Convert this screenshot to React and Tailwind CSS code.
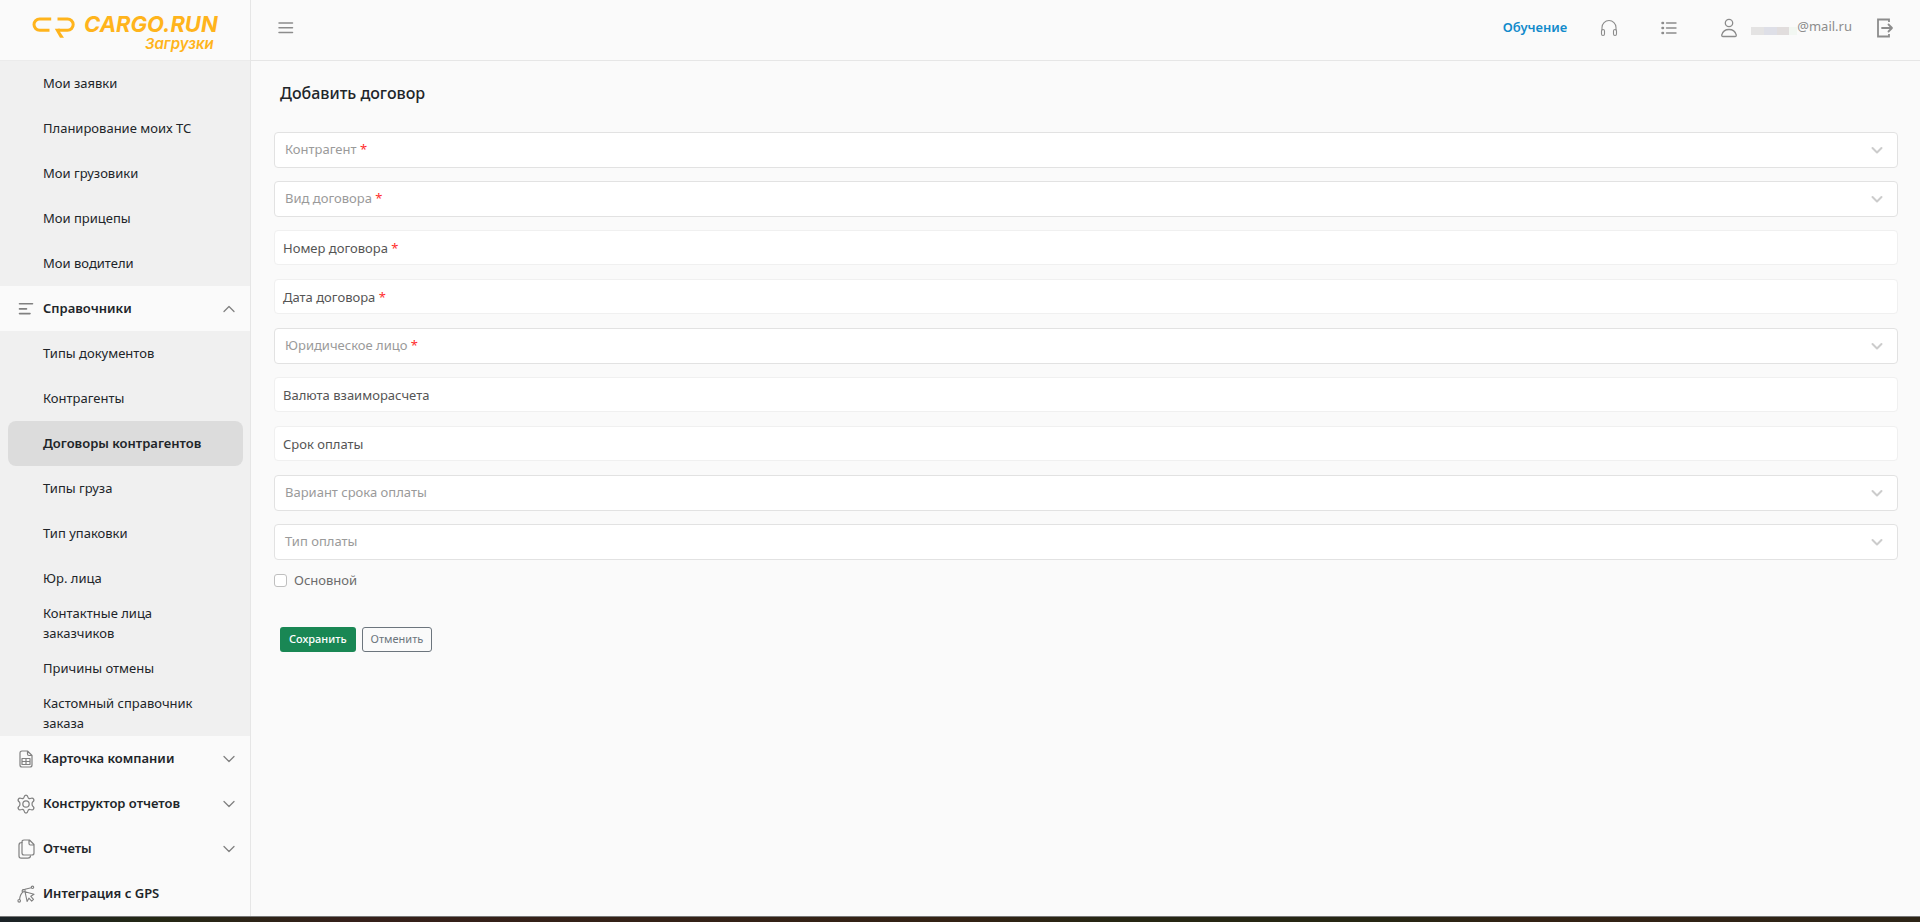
import React from "react";

const catalogTop = ["Мои заявки", "Планирование моих ТС", "Мои грузовики", "Мои прицепы", "Мои водители"];
const catalog = [
  "Типы документов",
  "Контрагенты",
  "Договоры контрагентов",
  "Типы груза",
  "Тип упаковки",
  "Юр. лица",
  "Контактные лица заказчиков",
  "Причины отмены",
  "Кастомный справочник заказа",
];

const fields = [
  { id: "contractor", label: "Контрагент", required: true, kind: "select" },
  { id: "kind", label: "Вид договора", required: true, kind: "select" },
  { id: "number", label: "Номер договора", required: true, kind: "text" },
  { id: "date", label: "Дата договора", required: true, kind: "text" },
  { id: "entity", label: "Юридическое лицо", required: true, kind: "select" },
  { id: "currency", label: "Валюта взаиморасчета", kind: "text" },
  { id: "term", label: "Срок оплаты", kind: "text" },
  { id: "termKind", label: "Вариант срока оплаты", kind: "select" },
  { id: "payKind", label: "Тип оплаты", kind: "select" },
];

function Svg({ size = 18, box = 18, width = 1.1, className = "", children }) {
  return (
    <svg
      width={size}
      height={size}
      viewBox={`0 0 ${box} ${box}`}
      fill="none"
      stroke="currentColor"
      strokeWidth={width}
      strokeLinecap="round"
      strokeLinejoin="round"
      className={`shrink-0 ${className}`}
      aria-hidden="true"
    >
      {children}
    </svg>
  );
}

const ListIcon = () => (
  <Svg width={1.6}>
    <path d="M2.5 3.8h13M2.5 8.9h7M2.5 13.6h10.500" />
  </Svg>
);

const SheetIcon = () => (
  <Svg width={1.2}>
    <path d="M3 3.200C3 1.800 3.600 1 5 1h5.500L15 5.500V15c0 1.400-.6 2-2 2H5c-1.400 0-2-.6-2-2zM10.500 1v3c0 1 .5 1.500 1.500 1.500h3" />
    <path d="M5 8.500h8v6H5zM5 11.500h8M9 8.500v6" />
  </Svg>
);

const GearIcon = () => (
  <Svg size={20} box={24} width={1.5}>
    <circle cx="12" cy="12" r="3.800" />
    <path d="M9.600 3.900C9.900 2.400 10.600 1.200 12 1.200s2.100 1.200 2.400 2.700c.2 1.200 1.500 2 2.700 1.500 1.400-.5 3.200-.8 4 .6s.1 2.800-1.100 3.700c-1 .8-1 3.800 0 4.600 1.200.9 1.900 2.300 1.100 3.700s-2.600 1.100-4 .6c-1.200-.5-2.500.3-2.700 1.500-.3 1.500-1 2.700-2.400 2.700s-2.100-1.200-2.400-2.700c-.2-1.200-1.500-2-2.700-1.500-1.400.5-3.200.8-4-.6s-.1-2.800 1.100-3.700c1-.8 1-3.800 0-4.600C2.800 8.800 2.100 7.400 2.900 6s2.600-1.100 4-.6c1.200.5 2.500-.3 2.700-1.500z" />
  </Svg>
);

const DocsIcon = () => (
  <Svg size={20} box={20} width={1.2}>
    <path d="M8 1h5.500L18 5.500V14c0 1.400-.8 2-2 2H8c-1.400 0-2-.7-2-2V3c0-1.400.7-2 2-2zM13 1v3.500c0 1 .5 1.500 1.500 1.500H18" />
    <path d="M6 3.500c-2 0-3 .7-3 2.500v11c0 1.400.9 2.200 2.200 2.200h6.600c1.500 0 2.700-.7 2.700-2.400" />
  </Svg>
);

const GpsIcon = () => (
  <Svg>
    <circle cx="15.500" cy="2.300" r="1.200" />
    <circle cx="2.200" cy="15.800" r="1.300" />
    <path d="M14.300 2.700 8 4.300M4.800 5.900l1.200-.6M2.600 14.500C2.900 11 4 8.500 6.300 6.800M5.700 4.500h2.300v2.200H5.700z" />
    <path d="m8 6.700 9 2.600-3.200 2 2.700 3-1.800 1.900-2.800-3-1.800 3.300z" />
  </Svg>
);

const Chevron = ({ up }) => (
  <Svg size={12} box={12} width={1.3} className="text-[#808080]">
    <path d={up ? "M1 8.500l5-5 5 5" : "M1 3.500l5 5 5-5"} />
  </Svg>
);

const sections = [
  { label: "Карточка компании", icon: SheetIcon, chevron: true },
  { label: "Конструктор отчетов", icon: GearIcon, chevron: true },
  { label: "Отчеты", icon: DocsIcon, chevron: true },
  { label: "Интеграция с GPS", icon: GpsIcon, chevron: false },
];

function SubList({ items, active }) {
  return (
    <ul className="bg-[#f0f0f0] pr-[7px] pl-2">
      {items.map((item) => (
        <li key={item}>
          <a
            href="#"
            className={`flex h-[45px] items-center rounded-lg pr-9 pb-[2px] pl-[35px] leading-5 ${
              item === active ? "bg-[#dcdcdc] font-semibold whitespace-nowrap" : ""
            }`}
          >
            {item}
          </a>
        </li>
      ))}
    </ul>
  );
}

function Section({ label, icon: Icon, chevron, open }) {
  return (
    <button type="button" aria-expanded={open} className="flex h-[45px] w-full items-center pr-[15px] pl-4 text-left font-semibold">
      <span className="flex w-5 justify-center text-[#808080]">
        <Icon />
      </span>
      <span className="ml-[7px] flex-1">{label}</span>
      {chevron && <Chevron up={open} />}
    </button>
  );
}

function Logo() {
  return (
    <a href="#" className="flex h-[60px] items-start pt-3 pl-8 text-[#ffb41c]" aria-label="CARGO.RUN Загрузки">
      <svg width="43" height="28" viewBox="0 0 43 28" fill="none" stroke="currentColor" strokeWidth="3" aria-hidden="true">
        <path d="M19.200 6.900H7.700a5.700 5.700 0 0 0 0 11.400H17.500M25.500 6.900H35.500a5.700 5.700 0 0 1 0 11.400H25.800" />
        <path d="M22.800 16.800h5l4.200 4.200-1 4.700h-0.500l-5.500-5.200z" fill="none" stroke="none" />
        <path d="M22.800 16.800h5.200v3l4 5.900h-4z" fill="currentColor" stroke="none" />
      </svg>
      <span className="ml-[9px] flex flex-col items-end font-['Inter',sans-serif] italic">
        <span className="text-[22px] leading-6 font-bold">CARGO.RUN</span>
        <span className="pr-1 text-[15px] leading-4 font-semibold">Загрузки</span>
      </span>
    </a>
  );
}

function Field({ id, label, required, kind }) {
  const select = kind === "select";
  const Control = select ? "select" : "input";
  return (
    <div className="grid h-9 grid-cols-1">
      <Control
        id={id}
        className={`col-start-1 row-start-1 w-full appearance-none rounded border bg-white px-3 outline-none ${
          select ? "h-9 border-[#e2e2e2]" : "h-[35px] border-[#f0f0f0]"
        }`}
      />
      <label
        htmlFor={id}
        className={`pointer-events-none col-start-1 row-start-1 flex items-center justify-between ${
          select ? "pr-[15px] pl-[11px] text-[#9a9a9a]" : "pt-px pl-[9px] text-[#555]"
        }`}
      >
        <span>
          {label}
          {required && <span className="text-[#ff2d2d]"> *</span>}
        </span>
        {select && (
          <Svg size={12} box={12} width={2} className="text-[#cccccc]">
            <path d="M1.500 4l4.500 4.500L10.500 4" />
          </Svg>
        )}
      </label>
    </div>
  );
}

export default function App() {
  return (
    <div className="flex min-h-screen flex-col bg-[#fafafa] font-['Noto_Sans','Open_Sans',sans-serif] text-[13px] text-[#212529]">
      <div className="flex flex-1">
        <aside className="w-[251px] shrink-0 border-r border-[#e6e6e6]">
          <Logo />
          <nav className="border-t border-[#ebebeb]">
            <SubList items={catalogTop} />
            <Section label="Справочники" icon={ListIcon} chevron open />
            <SubList items={catalog} active="Договоры контрагентов" />
            {sections.map((s) => (
              <Section key={s.label} {...s} open={false} />
            ))}
          </nav>
        </aside>

        <div className="flex min-w-0 flex-1 flex-col">
          <header className="flex h-[61px] items-center border-b border-[#e6e6e6] pr-[25px] pb-1 pl-[26px] text-[#8c8c8c]">
            <button type="button" aria-label="Меню">
              <Svg width={1.5}>
                <path d="M2 4h13.500M2 8.800h13.500M2 13.600h13.500" />
              </Svg>
            </button>
            <a href="#" className="ml-auto font-semibold text-[#118acb]">Обучение</a>
            <button type="button" aria-label="Поддержка" className="ml-[33px]">
              <Svg>
                <path d="M2 11V8.500a7 7 0 0 1 14 0V11" />
                <rect x="1.500" y="10.500" width="3" height="6" rx="1.500" />
                <rect x="13.500" y="10.500" width="3" height="6" rx="1.500" />
              </Svg>
            </button>
            <button type="button" aria-label="Список" className="ml-[42px]">
              <Svg width={1.400}>
                <path d="M6.500 4H16M6.500 9H16M6.500 14H16" />
                <path d="M2.500 4h.5M2.500 9h.5M2.500 14h.5" strokeWidth="2.500" />
              </Svg>
            </button>
            <button type="button" className="ml-[41px] flex items-center">
              <Svg size={20} box={20} width={1.300}>
                <circle cx="10" cy="5" r="3.700" />
                <path d="M4 18.500h12c1 0 1.500-.7 1.200-1.700C16.300 13.500 13.500 11.500 10 11.500s-6.300 2-7.200 5.300c-.3 1 .2 1.700 1.200 1.700z" />
              </Svg>
              <span className="mt-[5px] ml-3 flex h-2 w-[46px]">
                <span className="flex-1 bg-[#e4e3e3]" />
                <span className="flex-1 bg-[#dedfe7]" />
                <span className="flex-1 bg-[#e1dddd]" />
                <span className="w-2 bg-[#f2f7f2]" />
              </span>
              <span className="pb-[2px]">@mail.ru</span>
            </button>
            <button type="button" aria-label="Выйти" className="ml-[23px]">
              <Svg size={20} box={20} width={1.800}>
                <path d="M14 4V1.500H3v17h11V16" strokeLinecap="butt" strokeLinejoin="miter" />
                <path d="M7 10h10M13.500 6.500 17 10l-3.500 3.500" />
              </Svg>
            </button>
          </header>

          <main className="pr-[22px] pl-[23px]">
            <h1 className="mt-5 pl-[6px] text-base leading-6 font-medium">Добавить договор</h1>
            <form className="mt-[27px]">
              <div className="flex flex-col gap-[13px]">
                {fields.map((f) => (
                  <Field key={f.id} {...f} />
                ))}
              </div>
              <label className="mt-[11px] flex items-center gap-[7px] text-[#6c6c6c]">
                <input type="checkbox" className="size-[13px] appearance-none rounded-[3px] border border-[#bfbfbf] bg-white" />
                Основной
              </label>
              <div className="mt-9 flex gap-[6px] pl-[6px] text-[11px]">
                <button type="submit" className="h-[25px] rounded-[3px] bg-[#198754] px-[9px] font-medium text-white">
                  Сохранить
                </button>
                <button type="button" className="h-[25px] rounded-[3px] border border-[#6c757d] px-2 text-[#6c757d]">
                  Отменить
                </button>
              </div>
            </form>
          </main>
        </div>
      </div>
      <div className="h-[6px] border-t border-[#777] bg-[linear-gradient(to_right,#1b2327,#242814_8%,#35201a_18%,#332214_50%,#262613_58%,#262613_72%,#332214_80%,#2c2416)]" />
    </div>
  );
}
